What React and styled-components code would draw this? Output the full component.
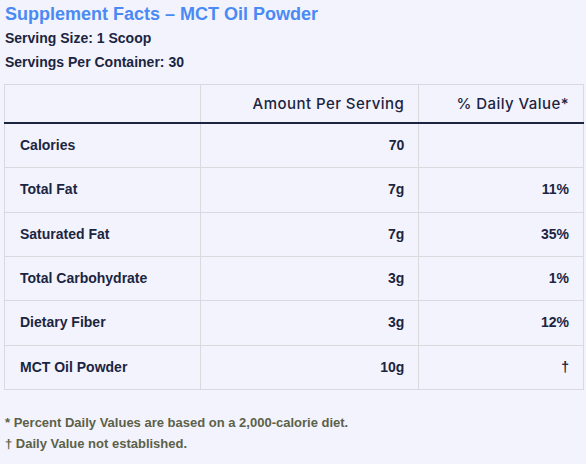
import React from 'react';
import styled, { createGlobalStyle } from 'styled-components';

const GlobalStyle = createGlobalStyle`
  html, body {
    margin: 0;
    padding: 0;
    background: #f3f3fd;
  }
  body {
    font-family: "Liberation Sans", Arial, sans-serif;
    color: #1b2541;
  }
`;

const rows = [
  { name: 'Calories', amount: '70', dv: '' },
  { name: 'Total Fat', amount: '7g', dv: '11%' },
  { name: 'Saturated Fat', amount: '7g', dv: '35%' },
  { name: 'Total Carbohydrate', amount: '3g', dv: '1%' },
  { name: 'Dietary Fiber', amount: '3g', dv: '12%' },
  { name: 'MCT Oil Powder', amount: '10g', dv: '†' },
];

const Page = styled.div`
  padding: 2px 4px 0 4px;
  width: 586px;
  box-sizing: border-box;
`;

const Title = styled.h2`
  margin: 0;
  font-size: 18px;
  line-height: 24px;
  font-weight: 700;
  color: #4a8af4;
  padding-left: 1px;
`;

const Meta = styled.p`
  margin: 0;
  font-size: 14px;
  line-height: 24px;
  font-weight: 700;
  padding-left: 1px;
`;

const Table = styled.table`
  margin-top: 10px;
  width: 580px;
  border-collapse: collapse;
  font-size: 14px;
`;

const HeadCell = styled.th`
  font-family: Inter, "Liberation Sans", sans-serif;
  font-weight: 500;
  font-size: 15px;
  letter-spacing: 0.45px;
  line-height: 18px;
  padding: 10px 14px 9px 15px;
  text-align: right;
  border: 1px solid #dadade;
  border-bottom: 2px solid #1b2541;
  color: #1b2541;
`;

const Cell = styled.td`
  font-weight: 700;
  line-height: 19.33px;
  padding: 12px 14px 12px 15px;
  text-align: ${(p) => (p.$left ? 'left' : 'right')};
  border: 1px solid #dadade;
`;

const Notes = styled.div`
  margin-top: 22px;
  padding-left: 1px;
  color: #5b6148;
  font-size: 13px;
  font-weight: 700;
  line-height: 21px;
`;

export default function App() {
  return (
    <>
      <GlobalStyle />
      <Page>
        <Title>Supplement Facts – MCT Oil Powder</Title>
        <Meta>Serving Size: 1 Scoop</Meta>
        <Meta>Servings Per Container: 30</Meta>
        <Table>
          <colgroup>
            <col style={{ width: 196 }} />
            <col style={{ width: 219 }} />
            <col style={{ width: 165 }} />
          </colgroup>
          <thead>
            <tr>
              <HeadCell></HeadCell>
              <HeadCell>Amount Per Serving</HeadCell>
              <HeadCell>% Daily Value*</HeadCell>
            </tr>
          </thead>
          <tbody>
            {rows.map((r) => (
              <tr key={r.name}>
                <Cell $left>{r.name}</Cell>
                <Cell>{r.amount}</Cell>
                <Cell>{r.dv}</Cell>
              </tr>
            ))}
          </tbody>
        </Table>
        <Notes>
          <div>* Percent Daily Values are based on a 2,000-calorie diet.</div>
          <div>† Daily Value not established.</div>
        </Notes>
      </Page>
    </>
  );
}
